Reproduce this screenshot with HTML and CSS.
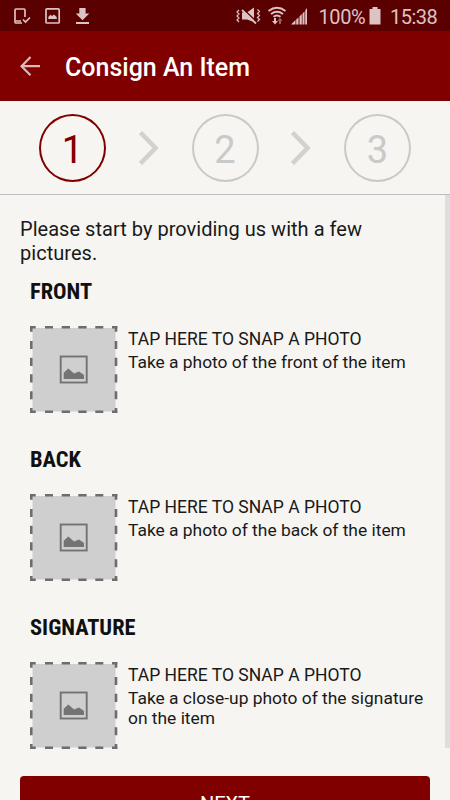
FILE: index.html
```html
<!DOCTYPE html>
<html lang="en">
<head>
<meta charset="utf-8">
<title>Consign An Item</title>
<link rel="stylesheet" href="styles.css">
</head>
<body>
<svg class="defs" aria-hidden="true">
  <symbol id="photo" viewBox="0 0 88 88">
    <rect x="2.5" y="2" width="83" height="83.5" fill="#cfcfcf"/>
    <g fill="none" stroke="#6d6d6d" stroke-width="2.6" stroke-dasharray="5.7 9.3 8 8.7 8.3 8.3 8.3 8.7 8 8.7 6">
      <path d="M0 1.1H87.5M0 85.7H87.5M1.3 0V87M86 0V87"/>
    </g>
    <rect x="30.7" y="30.5" width="26" height="26" fill="none" stroke="#737373" stroke-width="1.9"/>
    <path d="M33.7 53.1V46.8L38.3 42.6L44 47.6L49 45.6L54 48.9V53.1Z" fill="#737373"/>
  </symbol>
</svg>
<div class="status">
  <svg class="status-left" viewBox="0 0 100 31" fill="none" stroke="#dcc4c4" stroke-width="1.7">
    <path d="M25 17V10Q25 9 24 9H16Q15 9 15 10V22Q15 23 16 23H22M16 21H21M23 19.5L25.5 22L30 17.5"/>
    <rect x="46" y="8.8" width="13.2" height="14.2" rx="1"/>
    <path d="M48.3 19V17L50.5 14.8L52 16L54 14.5L56.7 17V19Z" fill="#dcc4c4" stroke="none"/>
    <path d="M79.3 8H85.6V13.5H89.3L82.5 20.3L75.7 13.5H79.3ZM76 22H89V24H76Z" fill="#dcc4c4" stroke="none"/>
  </svg>
  <svg class="status-right" viewBox="235 0 76 31" fill="none" stroke="#dcc4c4">
    <path d="M242 12.500H247L254 7.500V22L247 19.500H242Z" fill="#dcc4c4" stroke="none"/>
    <path d="M243 9L256.500 21.500" stroke="#5a0000" stroke-width="1.500"/>
    <path d="M242 10L256 23.500" stroke-width="1.8"/>
    <path d="M239 10L237 12L239 14L237 16L239 18L237 20L239 22M257.500 9.500L259.500 11.500L257.500 13.500L259.500 15.500L257.500 17.500L259.500 19.500L257.500 21.500" stroke-width="1.2"/>
    <path d="M268.5 11Q277 4.5 285.500 11M271 14Q277 9.500 283 14M273.500 16.800Q277 14 280.500 16.800" stroke-width="1.9"/>
    <path d="M274 18H276V21H278L275 24.500L272 21H274Z" fill="#dcc4c4" stroke="none"/>
    <path d="M279 24V21H277.500L280 17.500L282.500 21H281V24Z" fill="#9b5c5c" stroke="none"/>
    <path d="M291 24.500L295.500 20V24.500ZM296.200 19.500L298.500 17.500V24.500H296.200ZM299.500 16.500L301.800 14V24.500H299.500ZM302.500 13.500L304.500 11.500V24.500H302.500ZM305.200 10.500L307 8V24.500H305.200Z" fill="#dcc4c4" stroke="none"/>
  </svg>
  <span class="percent">100%</span>
  <svg class="battery" viewBox="0 0 12 18"><path d="M3.500 0H8.500V2H11.500V17.500H.5V2H3.500Z" fill="#dcc4c4"/></svg>
  <span class="clock">15:38</span>
</div>
<header class="appbar">
  <svg class="back" viewBox="0 0 20 20" fill="none" stroke="#dcbaba" stroke-width="2.2"><path d="M20 10.200H2M10.500 1L1.500 10.200L10.500 19.200"/></svg>
  <h1>Consign An Item</h1>
</header>
<nav class="steps">
  <div class="step active"><span>1</span></div>
  <svg class="chevron" viewBox="0 0 20 34"><path d="M1.500 1.500L16.500 17L1.500 32.500" fill="none" stroke="#d2d2d0" stroke-width="4.600"/></svg>
  <div class="step"><span>2</span></div>
  <svg class="chevron" viewBox="0 0 20 34"><path d="M1.500 1.500L16.500 17L1.500 32.500" fill="none" stroke="#d2d2d0" stroke-width="4.600"/></svg>
  <div class="step"><span>3</span></div>
</nav>
<main>
  <p class="intro">Please start by providing us with a few pictures.</p>
  <section>
    <h2>FRONT</h2>
    <div class="row">
      <svg class="photo"><use href="#photo"/></svg>
      <div class="text"><p class="tap">TAP HERE TO SNAP A PHOTO</p><p class="hint">Take a photo of the front of the item</p></div>
    </div>
  </section>
  <section>
    <h2>BACK</h2>
    <div class="row">
      <svg class="photo"><use href="#photo"/></svg>
      <div class="text"><p class="tap">TAP HERE TO SNAP A PHOTO</p><p class="hint">Take a photo of the back of the item</p></div>
    </div>
  </section>
  <section>
    <h2>SIGNATURE</h2>
    <div class="row">
      <svg class="photo"><use href="#photo"/></svg>
      <div class="text"><p class="tap">TAP HERE TO SNAP A PHOTO</p><p class="hint">Take a close-up photo of the signature on the item</p></div>
    </div>
  </section>
  <button class="next">NEXT</button>
  <div class="scrollbar"></div>
</main>
</body>
</html>
```
FILE: styles.css
```css
* { box-sizing: border-box; margin: 0; padding: 0; }
html, body { height: 800px; overflow: hidden; }
body { width: 450px; background: #f6f5f1; color: #191919; font-family: Roboto, sans-serif; display: flex; flex-direction: column; }
.defs { position: absolute; width: 0; height: 0; }
.status { height: 31px; flex: none; background: #5a0000; color: #dcc4c4; display: flex; align-items: center; font-size: 20px; white-space: nowrap; }
.status-left { width: 100px; height: 31px; margin-right: 135px; }
.status-right { width: 76px; height: 31px; }
.percent { width: 50px; margin-left: 7.500px; padding-top: 2px; letter-spacing: -.4px; }
.battery { width: 12px; height: 18px; margin: 1px 0 0 .5px; }
.clock { margin-left: 9px; padding-top: 2px; letter-spacing: -.5px; }
.appbar { height: 70px; flex: none; background: #800000; display: flex; align-items: center; padding: 3px 0 0 20px; }
.back { width: 20px; height: 20px; margin-top: -3px; }
h1 { margin-left: 25px; color: #fff; font-size: 25px; font-weight: 500; line-height: 30px; }
.steps { height: 94px; flex: none; display: flex; align-items: center; justify-content: space-between; padding: 1px 39px 0; border-bottom: 1px solid #bdbdbf; }
.step { width: 67px; height: 68px; border: 2px solid #c9c9c9; border-radius: 50%; color: #c9c9c9; font-size: 38px; display: flex; align-items: center; justify-content: center; padding-top: 3px; }
.step.active { border-color: #800000; color: #800000; }
.chevron { width: 20px; height: 34px; }
main { position: relative; flex: 1; padding: 23px 20px 0; overflow: hidden; }
.intro { font-size: 20px; letter-spacing: .03px; line-height: 23.5px; height: 47px; }
section { height: 168px; padding-left: 10px; }
section:first-of-type { margin-top: 12px; }
h2 { font-family: "Roboto Condensed", Roboto, sans-serif; font-stretch: 75%; font-size: 22.400px; font-weight: 700; line-height: 28px; color: #101010; }
.row { display: flex; margin-top: 20.500px; }
.photo { width: 88px; height: 88px; flex: none; }
.text { margin: 1px -10px 0 10px; }
.tap { font-size: 17.500px; line-height: 24.500px; white-space: nowrap; }
.hint { font-size: 17.400px; line-height: 20.500px; padding-top: .5px; }
.next { display: block; width: 410px; height: 55px; margin-top: -5px; border: 0; border-radius: 4px; background: #800000; color: #fff; font: 20px Roboto, sans-serif; }
.scrollbar { position: absolute; right: 0; top: 0; width: 5px; height: 553px; background: #dedede; }
```
